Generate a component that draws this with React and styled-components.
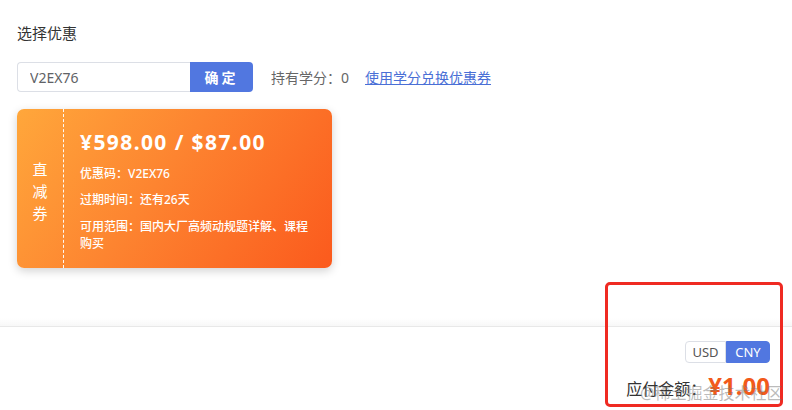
import React, { useState } from 'react';
import styled, { createGlobalStyle } from 'styled-components';

const GlobalStyle = createGlobalStyle`
  body {
    margin: 0;
    background: #fff;
    font-family: "Noto Sans", "Noto Sans CJK SC", sans-serif;
  }
`;

const Page = styled.div`
  position: relative;
  width: 792px;
  height: 410px;
  overflow: hidden;
`;

const Section = styled.div`
  padding: 22px 17px 0 17px;
  height: 326px;
  box-sizing: border-box;
`;

const Title = styled.p`
  margin: 0;
  font-size: 15px;
  line-height: 22px;
  color: #333;
`;

const FormRow = styled.div`
  display: flex;
  align-items: center;
  margin-top: 18px;
  height: 30px;
`;

const CodeInput = styled.input`
  width: 173px;
  height: 30px;
  box-sizing: border-box;
  border: 1px solid #dcdfe6;
  border-right: none;
  border-radius: 4px 0 0 4px;
  padding: 0 12px;
  font-family: inherit;
  font-size: 14px;
  color: #606266;
  outline: none;
`;

const ConfirmButton = styled.button`
  width: 63px;
  height: 30px;
  border: none;
  border-radius: 0 4px 4px 0;
  background: #5177e0;
  color: #fff;
  font-family: inherit;
  font-size: 14px;
  font-weight: 700;
  letter-spacing: 3px;
  padding-left: 6px;
`;

const Credit = styled.span`
  margin-left: 18px;
  font-size: 14px;
  color: #666;
`;

const Link = styled.a`
  margin-left: 16px;
  font-size: 14px;
  color: #4a6fd6;
  text-decoration: underline;
  cursor: pointer;
`;

const Coupon = styled.div`
  display: flex;
  width: 315px;
  height: 159px;
  margin-top: 17px;
  border-radius: 7px;
  background: linear-gradient(125deg, #ffa73b 0%, #fd8430 45%, #fb5a1d 100%);
  box-shadow: 0 3px 10px rgba(0, 0, 0, 0.18);
  color: #fff;
`;

const CouponType = styled.div`
  width: 47px;
  border-right: 1px dashed rgba(255, 255, 255, 0.95);
  display: flex;
  flex-direction: column;
  align-items: center;
  justify-content: center;
  font-size: 15px;
  line-height: 22px;
  padding-top: 4px;
  box-sizing: border-box;
`;

const CouponBody = styled.div`
  flex: 1;
  padding: 19px 14px 0 16px;
`;

const Amount = styled.div`
  font-size: 21px;
  font-weight: 700;
  letter-spacing: 1.4px;
  line-height: 28px;
`;

const Info = styled.div`
  font-size: 12px;
  line-height: 17px;
  font-weight: 500;
  margin-top: ${(p) => p.gap}px;
`;

const Footer = styled.div`
  position: relative;
  border-top: 1px solid #e8e8e8;
  display: flex;
  flex-direction: column;
  align-items: flex-end;
  padding: 14px 22px 0 0;
  &::before {
    content: '';
    position: absolute;
    left: 0;
    right: 0;
    top: -9px;
    height: 8px;
    background: linear-gradient(to bottom, rgba(0, 0, 0, 0), rgba(0, 0, 0, 0.03));
  }
`;

const Toggle = styled.div`
  display: flex;
  height: 22px;
`;

const ToggleItem = styled.div`
  display: flex;
  align-items: center;
  justify-content: center;
  width: ${(p) => p.w}px;
  box-sizing: border-box;
  font-size: 13px;
  border: 1px solid ${(p) => (p.active ? '#5177e0' : '#dcdfe6')};
  background: ${(p) => (p.active ? '#5177e0' : '#fff')};
  color: ${(p) => (p.active ? '#fff' : '#555')};
  border-radius: ${(p) => (p.first ? '4px 0 0 4px' : '0 4px 4px 0')};
  cursor: pointer;
`;

const Total = styled.div`
  display: flex;
  align-items: baseline;
  margin-top: 6px;
`;

const TotalLabel = styled.span`
  font-size: 16px;
  color: #333;
`;

const TotalPrice = styled.span`
  font-size: 24px;
  font-weight: 700;
  color: #f25a1a;
  margin-left: 2px;
`;

const Highlight = styled.div`
  position: absolute;
  left: 605px;
  top: 282px;
  width: 178px;
  height: 125px;
  box-sizing: border-box;
  border: 3px solid #ef2a22;
  border-radius: 5px;
  pointer-events: none;
`;

const Watermark = styled.div`
  position: absolute;
  left: 640px;
  top: 382px;
  font-size: 16px;
  line-height: 22px;
  color: rgba(120, 120, 120, 0.5);
  pointer-events: none;
  white-space: nowrap;
`;

const App = () => {
  const [currency, setCurrency] = useState('CNY');

  return (
    <Page>
      <GlobalStyle />
      <Section>
        <Title>选择优惠</Title>
        <FormRow>
          <CodeInput defaultValue="V2EX76" />
          <ConfirmButton>确定</ConfirmButton>
          <Credit>持有学分：0</Credit>
          <Link>使用学分兑换优惠券</Link>
        </FormRow>
        <Coupon>
          <CouponType>
            <span>直</span>
            <span>减</span>
            <span>券</span>
          </CouponType>
          <CouponBody>
            <Amount>¥598.00 / $87.00</Amount>
            <Info gap={9}>优惠码：V2EX76</Info>
            <Info gap={9}>过期时间：还有26天</Info>
            <Info gap={10}>可用范围：国内大厂高频动规题详解、课程购买</Info>
          </CouponBody>
        </Coupon>
      </Section>
      <Footer>
        <Toggle>
          <ToggleItem w={41} first active={currency === 'USD'} onClick={() => setCurrency('USD')}>
            USD
          </ToggleItem>
          <ToggleItem w={44} active={currency === 'CNY'} onClick={() => setCurrency('CNY')}>
            CNY
          </ToggleItem>
        </Toggle>
        <Total>
          <TotalLabel>应付金额：</TotalLabel>
          <TotalPrice>¥1.00</TotalPrice>
        </Total>
      </Footer>
      <Highlight />
      <Watermark>@稀土掘金技术社区</Watermark>
    </Page>
  );
};

export default App;
